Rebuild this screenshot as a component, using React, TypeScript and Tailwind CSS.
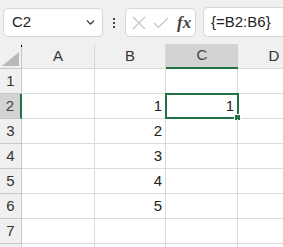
import { ChevronDown } from 'lucide-react';

const rows: { n: number; b?: string; c?: string }[] = [
  { n: 1 },
  { n: 2, b: '1', c: '1' },
  { n: 3, b: '2' },
  { n: 4, b: '3' },
  { n: 5, b: '4' },
  { n: 6, b: '5' },
  { n: 7 },
];

function FormulaBar() {
  return (
    <div className="flex items-start h-[44px] bg-[#f0f0f0] pt-[8px]">
      <div className="ml-[3px] w-[100px] h-[29px] bg-white border border-[#d6d6d6] rounded-[5px] flex items-center pl-[8px] pr-[5px]">
        <span className="flex-1 text-[15px] text-[#222]">C2</span>
        <ChevronDown className="w-[13px] h-[13px] text-[#333]" strokeWidth={2.5} />
      </div>
      <div className="w-[22px] h-[29px] flex flex-col items-center justify-center gap-[2px]">
        <span className="w-[2px] h-[2px] bg-[#444]" />
        <span className="w-[2px] h-[2px] bg-[#444]" />
        <span className="w-[2px] h-[2px] bg-[#444]" />
      </div>
      <div className="w-[71px] h-[29px] bg-white border border-[#d6d6d6] rounded-[5px] flex items-center pl-[6px] gap-[5px]">
        <svg width="14" height="14" viewBox="0 0 14 14" className="shrink-0">
          <path d="M1 1 L13 13 M13 1 L1 13" stroke="#c4c4c4" strokeWidth="1.2" fill="none" />
        </svg>
        <svg width="16" height="12" viewBox="0 0 16 12" className="shrink-0 ml-[2px]">
          <path d="M1 6 L5.5 10.5 L15 1" stroke="#c4c4c4" strokeWidth="1.2" fill="none" />
        </svg>
        <span className="ml-[3px] text-[17px] italic font-bold text-[#444] leading-none" style={{ fontFamily: '"Liberation Serif", "DejaVu Serif", serif' }}>
          fx
        </span>
      </div>
      <div className="ml-[7px] flex-1 h-[30px] -mt-[1px] bg-white border border-[#d6d6d6] border-r-0 rounded-l-[5px] flex items-center pl-[7px]">
        <span className="text-[15px] text-[#222]">{'{=B2:B6}'}</span>
      </div>
    </div>
  );
}

function HeaderRow() {
  return (
    <div className="flex h-[25px] bg-[#f0f0f0] text-[15px] text-[#333]">
      <div className="relative w-[22px] shrink-0 border-r border-[#c8c8c8] border-b">
        <span className="absolute right-[-1px] top-[1px] w-[1px] h-[2px] bg-black" />
        <svg width="17" height="14" viewBox="0 0 17 14" className="absolute left-[2px] top-[8px]">
          <path d="M0 14 L17 14 L17 0 Z" fill="#b9b9b9" />
        </svg>
      </div>
      <div className="w-[73px] shrink-0 border-r border-b border-[#d8d8d8] flex items-center justify-center">A</div>
      <div className="w-[71px] shrink-0 border-r border-b border-[#d8d8d8] flex items-center justify-center">B</div>
      <div className="w-[72px] shrink-0 bg-[#d3d3d3] border-b-2 border-[#217346] flex items-center justify-center text-[#444]">C</div>
      <div className="w-[72px] shrink-0 border-b border-[#d8d8d8] flex items-center justify-center">D</div>
    </div>
  );
}

export default function App() {
  return (
    <div className="w-[283px] h-[247px] overflow-hidden bg-white" style={{ fontFamily: '"Liberation Sans", Arial, sans-serif' }}>
      <FormulaBar />
      <HeaderRow />
      {rows.map((r) => {
        const sel = r.n === 2;
        return (
          <div key={r.n} className="flex h-[25px] text-[15px] text-[#222]">
            <div
              className={`w-[22px] shrink-0 flex items-center justify-center border-b border-[#c8c8c8] ${
                sel ? 'bg-[#d3d3d3] border-r-2 border-r-[#217346] text-[#444]' : 'bg-[#f0f0f0] border-r border-r-[#c8c8c8] text-[#333]'
              }`}
            >
              {r.n}
            </div>
            <div className="w-[73px] shrink-0 border-r border-b border-[#dadada]" />
            <div className="w-[71px] shrink-0 border-r border-b border-[#dadada] flex items-center justify-end pr-[3px]">{r.b}</div>
            <div className="relative w-[72px] shrink-0 border-r border-b border-[#dadada] flex items-center justify-end pr-[3px]">
              {r.c}
              {sel && (
                <>
                  <div className="absolute left-[-1px] top-[-1px] right-[-2px] bottom-[-1px] border-2 border-[#217346]" />
                  <div className="absolute right-[-4px] bottom-[-3px] w-[5px] h-[5px] bg-[#217346] border border-white box-content" />
                </>
              )}
            </div>
            <div className="flex-1 border-b border-[#dadada]" />
          </div>
        );
      })}
      <div className="flex h-[25px]">
        <div className="w-[22px] shrink-0 bg-[#f0f0f0] border-r border-[#c8c8c8]" />
        <div className="w-[73px] shrink-0 border-r border-[#dadada]" />
        <div className="w-[71px] shrink-0 border-r border-[#dadada]" />
        <div className="w-[72px] shrink-0 border-r border-[#dadada]" />
        <div className="flex-1" />
      </div>
    </div>
  );
}
